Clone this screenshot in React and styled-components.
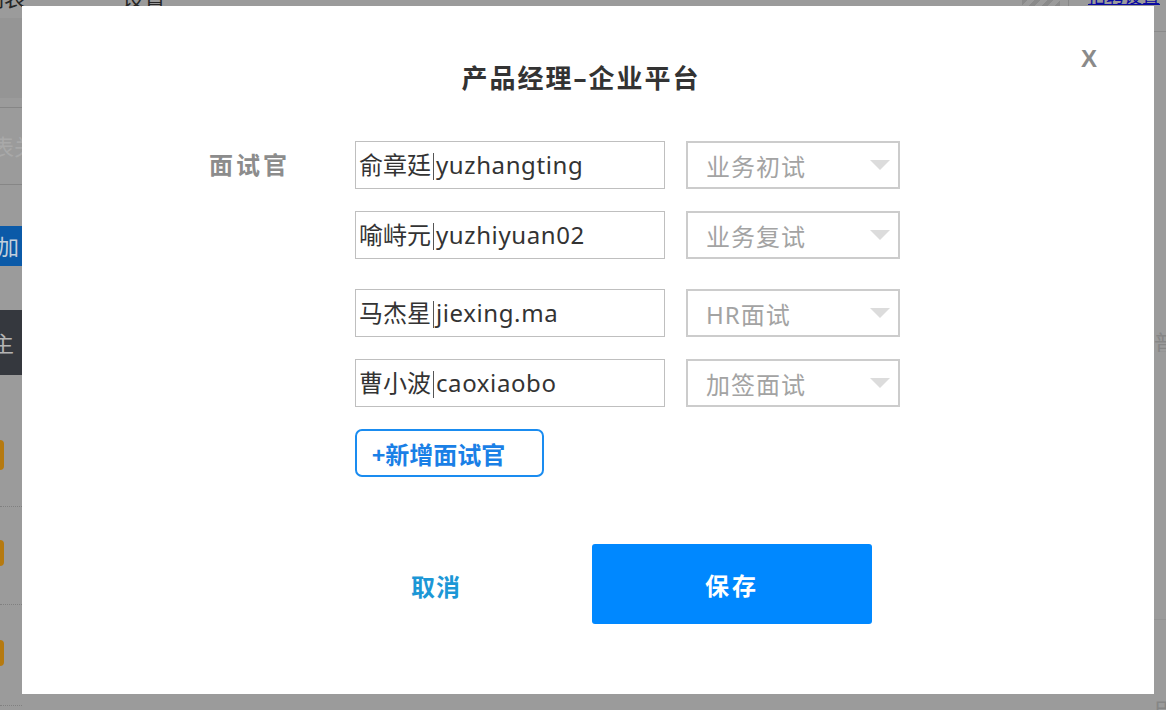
import React from 'react';
import styled, { createGlobalStyle } from 'styled-components';

const GlobalStyle = createGlobalStyle`
  html, body { margin: 0; padding: 0; }
  body {
    width: 1166px;
    height: 710px;
    overflow: hidden;
    background: #9b9b9b;
    font-family: "Noto Sans", "Noto Sans CJK SC", sans-serif;
  }
`;

/* dimmed page behind the dialog */
const Page = styled.div`
  width: 1166px;
  height: 710px;
  display: flex;
  flex-direction: column;
  background: #9b9b9b;
  overflow: hidden;
`;

const TopBar = styled.div`
  height: 18px;
  flex: none;
  display: flex;
  align-items: flex-start;
  overflow: hidden;
`;

const NavText = styled.span`
  margin-top: -15px;
  margin-left: ${p => p.$left}px;
  font-size: 22px;
  line-height: 24px;
  color: #262626;
  white-space: nowrap;
`;

const Stripes = styled.div`
  margin-left: auto;
  width: 38px;
  height: 18px;
  background: repeating-linear-gradient(135deg, #8a8a8a 0 4px, #9b9b9b 4px 9px);
`;

const Divider = styled.div`
  width: 1px;
  height: 18px;
  margin-left: 8px;
  background: #888;
`;

const TopLink = styled.a`
  margin: -14px 6px 0 19px;
  font-size: 18px;
  line-height: 20px;
  color: #0a0aa0;
  text-decoration: underline;
  white-space: nowrap;
`;

const Body = styled.div`
  flex: 1;
  display: flex;
`;

const Rail = styled.div`
  width: ${p => p.$w}px;
  display: flex;
  flex-direction: column;
  overflow: hidden;
`;

const Band = styled.div`
  height: ${p => p.$h}px;
  flex: none;
  box-sizing: border-box;
  padding-top: ${p => p.$pad || 0}px;
  background: ${p => p.$bg || 'transparent'};
  border-bottom: ${p => p.$line || 'none'};
  display: flex;
  align-items: ${p => (p.$pad !== undefined ? 'flex-start' : 'center')};
  overflow: hidden;
`;

const RailText = styled.span`
  margin-left: ${p => p.$shift || 0}px;
  font-size: 22px;
  line-height: 24px;
  color: ${p => p.$color};
  white-space: nowrap;
`;

const Dot = styled.span`
  width: 14px;
  height: ${p => p.$h || 26}px;
  margin-left: -10px;
  border-radius: 4px;
  background: #b67a10;
`;

const Spacer = styled.div`
  flex: 1;
`;

/* dialog */
const Modal = styled.div`
  position: fixed;
  top: 6px;
  left: 22px;
  width: 1132px;
  height: 688px;
  box-sizing: border-box;
  padding-top: 54px;
  background: #fff;
`;

const Close = styled.span`
  position: absolute;
  top: 39px;
  right: 57px;
  font-family: "Liberation Sans", Arial, sans-serif;
  font-size: 24px;
  font-weight: bold;
  line-height: 28px;
  color: #8a8a8a;
  cursor: pointer;
`;

const Title = styled.h2`
  margin: 0;
  text-align: center;
  font-size: 26px;
  line-height: 36px;
  font-weight: bold;
  letter-spacing: 2px;
  color: #333;
  padding-right: 14px;
`;

const Form = styled.div`
  display: flex;
  margin-top: 45px;
  padding-left: 187px;
`;

const Label = styled.div`
  width: 146px;
  flex: none;
  font-size: 24px;
  line-height: 48px;
  font-weight: bold;
  letter-spacing: 3px;
  color: #8c8c8c;
`;

const Fields = styled.div`
  display: flex;
  flex-direction: column;
`;

const Row = styled.div`
  display: flex;
  gap: 21px;
  margin-top: ${p => p.$gap || 0}px;
`;

const Input = styled.div`
  width: 310px;
  height: 48px;
  box-sizing: border-box;
  border: 1px solid #bfbfbf;
  padding-left: 3px;
  font-size: 24px;
  line-height: 46px;
  color: #333;
  white-space: nowrap;
`;

const Pipe = styled.span`
  display: inline-block;
  width: 1px;
  height: 27px;
  margin: 0 2px;
  vertical-align: -6px;
  background: #555;
`;

const Account = styled.span`
  letter-spacing: 0.6px;
`;

const Select = styled.div`
  width: 214px;
  height: 48px;
  box-sizing: border-box;
  border: 2px solid #cccccc;
  padding: 0 8px 0 18px;
  display: flex;
  align-items: center;
  justify-content: space-between;
  font-size: 24px;
  letter-spacing: 1px;
  color: #a3a3a3;
`;

const Caret = styled.span`
  width: 0;
  height: 0;
  border-left: 10px solid transparent;
  border-right: 10px solid transparent;
  border-top: 10px solid #dcdcdc;
`;

const AddButton = styled.button`
  margin-top: 22px;
  width: 189px;
  height: 48px;
  box-sizing: border-box;
  border: 2px solid #1a8cf0;
  border-radius: 7px;
  background: #fff;
  font-family: inherit;
  font-size: 24px;
  font-weight: bold;
  color: #1a80e6;
  padding: 0 22px 0 0;
  cursor: pointer;
`;

const Footer = styled.div`
  display: flex;
  justify-content: center;
  gap: 16px;
  margin-top: 67px;
  padding-right: 8px;
`;

const FooterButton = styled.button`
  width: 280px;
  height: 80px;
  border: none;
  border-radius: 3px;
  background: ${p => (p.$primary ? '#0088ff' : 'transparent')};
  color: ${p => (p.$primary ? '#fff' : '#1c97d6')};
  font-family: inherit;
  font-size: 24px;
  font-weight: bold;
  letter-spacing: ${p => (p.$primary ? 3 : 1)}px;
  padding: 0;
  padding-top: ${p => (p.$primary ? 0 : 2)}px;
  cursor: pointer;
`;

const interviewers = [
  { cn: '俞章廷', id: 'yuzhangting', round: '业务初试', gap: 0 },
  { cn: '喻峙元', id: 'yuzhiyuan02', round: '业务复试', gap: 22 },
  { cn: '马杰星', id: 'jiexing.ma', round: 'HR面试', gap: 30 },
  { cn: '曹小波', id: 'caoxiaobo', round: '加签面试', gap: 22 },
];

export default function App() {
  return (
    <>
      <GlobalStyle />
      <Page>
        <TopBar>
          <NavText $left={-18}>列表</NavText>
          <NavText $left={96}>设置</NavText>
          <Stripes />
          <Divider />
          <TopLink>招聘设置</TopLink>
        </TopBar>
        <Body>
          <Rail $w={22}>
            <Band $h={80} $bg="#959595" />
            <Band $h={10} $line="1px solid #868686" />
            <Band $h={77} $line="1px solid #868686">
              <RailText $shift={-8} $color="#a9a9a9">表关</RailText>
            </Band>
            <Band $h={41} />
            <Band $h={40} $bg="#0b5aa8">
              <RailText $shift={-3} $color="#c3cfdc">加</RailText>
            </Band>
            <Band $h={44} />
            <Band $h={65} $bg="#35383e">
              <RailText $shift={-8} $color="#b4b4b4">主</RailText>
            </Band>
            <Band $h={32} />
            <Band $h={100} $pad={33} $line="1px dotted #808080"><Dot $h={30} /></Band>
            <Band $h={98} $pad={33} $line="1px dotted #808080"><Dot /></Band>
            <Band $h={101} $pad={35} $line="1px dotted #808080"><Dot /></Band>
          </Rail>
          <Spacer />
          <Rail $w={12}>
            <Band $h={14} $line="1px solid #8a8a8a" />
            <Band $h={300} />
            <Band $h={20}>
              <RailText $color="#868686">普</RailText>
            </Band>
            <Band $h={268} $line="1px solid #939393" />
            <Band $h={100} $pad={78}>
              <RailText $color="#868686">臣</RailText>
            </Band>
          </Rail>
        </Body>
      </Page>

      <Modal>
        <Close>X</Close>
        <Title>产品经理–企业平台</Title>
        <Form>
          <Label>面试官</Label>
          <Fields>
            {interviewers.map(item => (
              <Row key={item.id} $gap={item.gap}>
                <Input>
                  {item.cn}
                  <Pipe />
                  <Account>{item.id}</Account>
                </Input>
                <Select>
                  {item.round}
                  <Caret />
                </Select>
              </Row>
            ))}
            <div>
              <AddButton>+新增面试官</AddButton>
            </div>
          </Fields>
        </Form>
        <Footer>
          <FooterButton>取消</FooterButton>
          <FooterButton $primary>保存</FooterButton>
        </Footer>
      </Modal>
    </>
  );
}
